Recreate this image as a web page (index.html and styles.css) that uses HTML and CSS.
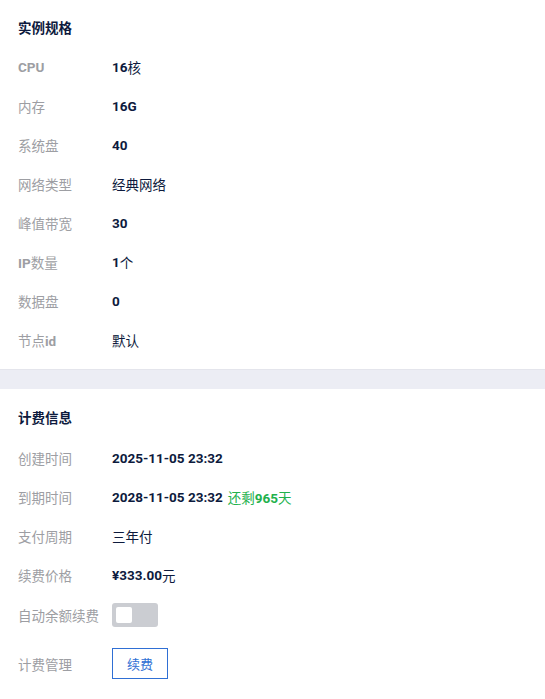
FILE: index.html
```html
<!DOCTYPE html>
<html lang="zh-CN">
<head>
<meta charset="utf-8">
<title>实例详情</title>
<link rel="stylesheet" href="styles.css">
</head>
<body>
<section class="panel panel-top">
  <h2 class="title">实例规格</h2>
  <div class="row"><span class="label"><b>CPU</b></span><span class="value"><b>16</b>核</span></div>
  <div class="row"><span class="label">内存</span><span class="value"><b>16G</b></span></div>
  <div class="row"><span class="label">系统盘</span><span class="value"><b>40</b></span></div>
  <div class="row"><span class="label">网络类型</span><span class="value">经典网络</span></div>
  <div class="row"><span class="label">峰值带宽</span><span class="value"><b>30</b></span></div>
  <div class="row"><span class="label"><b>IP</b>数量</span><span class="value"><b>1</b>个</span></div>
  <div class="row"><span class="label">数据盘</span><span class="value"><b>0</b></span></div>
  <div class="row"><span class="label">节点<b>id</b></span><span class="value">默认</span></div>
</section>
<div class="divider"></div>
<section class="panel panel-bottom">
  <h2 class="title">计费信息</h2>
  <div class="row"><span class="label">创建时间</span><span class="value"><b>2025-11-05 23:32</b></span></div>
  <div class="row"><span class="label">到期时间</span><span class="value"><b>2028-11-05 23:32</b><span class="remain">还剩<b>965</b>天</span></span></div>
  <div class="row"><span class="label">支付周期</span><span class="value">三年付</span></div>
  <div class="row"><span class="label">续费价格</span><span class="value"><b>¥333.00</b>元</span></div>
  <div class="row row-toggle"><span class="label">自动余额续费</span><span class="value"><span class="toggle"><span class="knob"></span></span></span></div>
  <div class="row row-btn"><span class="label">计费管理</span><span class="value"><button class="btn">续费</button></span></div>
</section>
</body>
</html>
```

FILE: styles.css
```css
* { box-sizing: border-box; }
html, body {
  margin: 0;
  padding: 0;
  background: #fff;
}
body {
  font-family: Roboto, "Noto Sans CJK SC", sans-serif;
  font-size: 13.5px;
  color: #0d1a3d;
}
b { font-weight: 700; }
.panel {
  padding: 0 18px;
}
.panel-top {
  padding-top: 18px;
  padding-bottom: 10px;
}
.panel-bottom {
  padding-top: 19px;
}
.title {
  margin: 0 0 9px;
  font-size: 13.5px;
  line-height: 20px;
  font-weight: 700;
  color: #0d1a3d;
}
.panel-bottom .title { margin-bottom: 10px; }
.row {
  display: flex;
  align-items: center;
  height: 39px;
}
.row-toggle { height: 42px; }
.row-btn { height: 55px; }
.label {
  width: 94px;
  flex: none;
  color: #9d9ea3;
}
.value {
  display: flex;
  align-items: center;
  color: #0d1a3d;
  white-space: pre;
}
.remain {
  color: #22b14c;
  margin-left: 5px;
}
.divider {
  height: 20px;
  background: #ecedf4;
  border-top: 1px solid #e4e5ec;
}
.toggle {
  display: block;
  width: 46px;
  height: 24px;
  border-radius: 3px;
  background: #cbcdd2;
  padding: 4px;
}
.knob {
  display: block;
  width: 16px;
  height: 16px;
  border-radius: 2px;
  background: #fff;
}
.btn {
  width: 56px;
  height: 31px;
  border: 1px solid #2f6fd4;
  background: #fff;
  color: #2f6fd4;
  font-family: inherit;
  font-size: 13px;
  padding: 0;
  cursor: pointer;
}
```
